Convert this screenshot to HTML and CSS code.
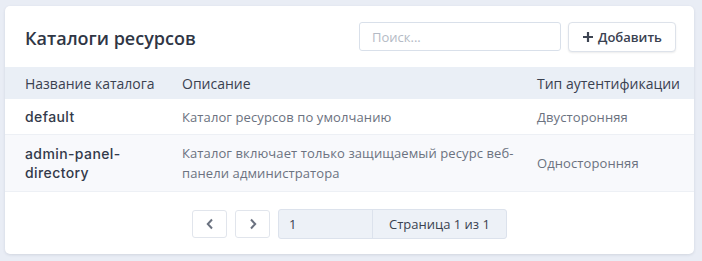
FILE: index.html
```html
<!DOCTYPE html>
<html>
<head>
    <title>Каталоги ресурсов</title>
    <link rel="stylesheet" href="styles.css">
</head>
<body>
    <div class="card">
        <div class="card-header">
            <h2 class="card-title">Каталоги ресурсов</h2>
            <div class="toolbar">
                <input class="search" placeholder="Поиск..."/>
                <button class="add-btn">
                    <svg width="12" height="12" viewBox="0 0 12 12"><path d="M6 1v10M1 6h10" stroke="#3d4452" stroke-width="2.2"/></svg>
                    Добавить
                </button>
            </div>
        </div>

        <table class="catalogs">
            <thead>
                <tr>
                    <th class="col-name">Название каталога</th>
                    <th class="col-desc">Описание</th>
                    <th class="col-auth">Тип аутентификации</th>
                </tr>
            </thead>
            <tbody>
                <tr>
                    <td class="name">default</td>
                    <td>Каталог ресурсов по умолчанию</td>
                    <td>Двусторонняя</td>
                </tr>
                <tr class="striped">
                    <td class="name">admin-panel-<br>directory</td>
                    <td>Каталог включает только защищаемый ресурс веб-<br>панели администратора</td>
                    <td>Односторонняя</td>
                </tr>
            </tbody>
        </table>

        <div class="pager">
            <button class="page-btn">
                <svg width="10" height="12" viewBox="0 0 10 12"><path d="M7 1.5L2.8 6L7 10.5" fill="none" stroke="#6b7280" stroke-width="2"/></svg>
            </button>
            <button class="page-btn">
                <svg width="10" height="12" viewBox="0 0 10 12"><path d="M3 1.5L7.2 6L3 10.5" fill="none" stroke="#6b7280" stroke-width="2"/></svg>
            </button>
            <div class="page-group">
                <input class="page-input" value="1"/>
                <span class="page-label">Страница 1 из 1</span>
            </div>
        </div>
    </div>
</body>
</html>
```

FILE: styles.css
```css
/* Page */
body {
    margin: 0;
    padding: 6px 8px 9px 5px;
    background-color: #e9edf5;
    font-family: 'Open Sans', 'Noto Sans', sans-serif;
    color: #3a4150;
}

/* Card */
.card {
    background-color: white;
    border-radius: 5px;
    box-shadow: 0 1px 3px rgba(40, 50, 70, 0.12);
    overflow: hidden;
}

.card-header {
    display: flex;
    align-items: center;
    justify-content: space-between;
    height: 61px;
    padding: 0 18px 0 20px;
}

.card-title {
    margin: 0;
    font-size: 18px;
    font-weight: 600;
    color: #2f3645;
    padding-top: 2px;
}

.toolbar {
    display: flex;
    gap: 7px;
    align-items: center;
}

.search {
    width: 202px;
    height: 29px;
    box-sizing: border-box;
    padding: 0 12px;
    border: 1px solid #d9e0ea;
    border-radius: 3px;
    font-family: inherit;
    font-size: 13px;
    color: #3a4150;
}

.search::placeholder {
    color: #b4bac5;
}

.add-btn {
    display: flex;
    align-items: center;
    gap: 4px;
    width: 108px;
    height: 30px;
    padding: 0 0 0 13px;
    border: 1px solid #dde2ea;
    border-radius: 4px;
    background-color: white;
    box-shadow: 0 1px 2px rgba(0, 0, 0, 0.08);
    font-family: inherit;
    font-size: 13px;
    font-weight: 600;
    color: #3a4150;
}

/* Table */
.catalogs {
    width: 100%;
    border-collapse: collapse;
    font-size: 13px;
}

.catalogs th {
    height: 32px;
    padding: 0 0 0 20px;
    background-color: #eaeff6;
    text-align: left;
    font-size: 14px;
    font-weight: 500;
    color: #3a4150;
}

.col-name { width: 137px; }
.col-desc { width: 335px; }

.catalogs td {
    padding: 0 0 0 20px;
    color: #6b7280;
    line-height: 20px;
    letter-spacing: 0.1px;
    border-bottom: 1px solid #edf0f5;
}

.catalogs tbody tr:first-child td {
    height: 35px;
}

.catalogs tr.striped td {
    height: 56px;
    background-color: #f8f9fc;
}

.catalogs td.name {
    font-family: 'Inter', sans-serif;
    font-size: 14px;
    font-weight: 500;
    letter-spacing: 0.4px;
    color: #333a4a;
    line-height: 19px;
}

/* Pagination */
.pager {
    display: flex;
    justify-content: center;
    align-items: center;
    gap: 8px;
    padding: 17px 0 15px;
}

.page-btn {
    width: 35px;
    height: 28px;
    display: flex;
    align-items: center;
    justify-content: center;
    border: 1px solid #e1e5ec;
    border-radius: 3px;
    background-color: white;
}

.page-group {
    display: flex;
    height: 28px;
    border: 1px solid #dce2ec;
    border-radius: 3px;
    background-color: #edf1f7;
    font-size: 13px;
}

.page-input {
    width: 94px;
    box-sizing: border-box;
    padding: 0 10px;
    border: none;
    border-right: 1px solid #dce2ec;
    background: transparent;
    font-family: inherit;
    font-size: 13px;
    color: #3a4150;
}

.page-label {
    width: 133px;
    display: flex;
    align-items: center;
    justify-content: center;
    color: #3a4150;
}
```
